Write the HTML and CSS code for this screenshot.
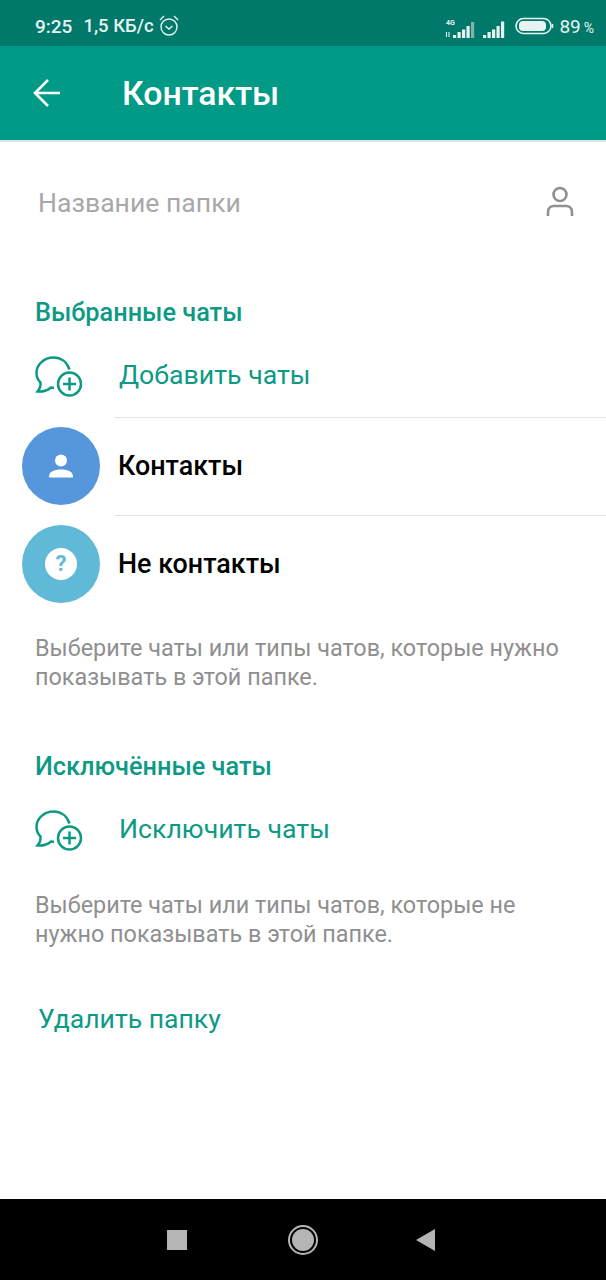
FILE: index.html
```html
<!DOCTYPE html>
<html>
<head>
    <title>Контакты</title>
    <link rel="stylesheet" href="styles.css">
</head>
<body>
    <div class="phone">
        <div class="status-bar">
            <div class="status-left">
                <span class="status-time">9:25</span>
                <span class="status-speed">1,5 КБ/с</span>
                <svg class="alarm" width="20" height="22" viewBox="0 0 20 22" fill="none" stroke="#e6f3f0" stroke-width="1.400">
                    <circle cx="10" cy="13" r="8"/>
                    <path d="M6.500 12l3.500 3 3.500-3"/>
                    <path d="M1 6l4-4M19 6l-4-4"/>
                </svg>
            </div>
            <div class="status-right">
                <svg width="34" height="24" viewBox="0 0 34 24">
                    <text x="2" y="11" class="net-label">4G</text>
                    <path d="M2.500 18v5M5 18v5" stroke="#e6f3f0" stroke-width="1.100" fill="none"/>
                    <path d="M9 21h3.200v3H9zM13.500 18h3.200v6h-3.200zM18 15.500h3.200V24H18zM22.500 12h3.200v12h-3.200z" fill="#e6f3f0"/>
                    <path d="M27 8h3.200v16H27z" fill="#7fb5a9"/>
                </svg>
                <svg class="signal-two" width="24" height="24" viewBox="0 0 24 24">
                    <path d="M1 21h3.200v3H1zM5.500 18h3.200v6H5.500zM10 15.500h3.200V24H10zM14.500 12h3.200v12h-3.200zM19 7.500h3.200V24H19z" fill="#e6f3f0"/>
                </svg>
                <svg class="battery" width="39" height="18" viewBox="0 0 39 18">
                    <rect x="1" y="1.500" width="35" height="15" rx="7.500" fill="none" stroke="#e6f3f0" stroke-width="1.600"/>
                    <rect x="4" y="4" width="27" height="10" rx="4" fill="#e6f3f0"/>
                    <path d="M37.500 7v4" stroke="#e6f3f0" stroke-width="1.500"/>
                </svg>
                <span class="battery-value">89</span>
                <span class="battery-percent">%</span>
            </div>
        </div>

        <div class="app-bar">
            <svg class="back" width="30" height="30" viewBox="0 0 30 30" fill="none" stroke="#fff" stroke-width="2.600">
                <path d="M28 15H3M16 2L3 15l13 13"/>
            </svg>
            <h1 class="app-title">Контакты</h1>
        </div>

        <div class="content">
            <div class="name-row">
                <span class="name-placeholder">Название папки</span>
                <svg width="30" height="32" viewBox="0 0 30 32" fill="none" stroke="#8f8f8f" stroke-width="2.600">
                    <circle cx="15" cy="8.500" r="6.500"/>
                    <path d="M3 30v-4c0-4 3-6 6-6h12c3 0 6 2 6 6v4"/>
                </svg>
            </div>

            <div class="section-title first">Выбранные чаты</div>
            <div class="add-row">
                <svg class="chat-plus" width="50" height="44" viewBox="0 -1 50 44" fill="none" stroke="#0d9a85" stroke-width="2.500">
                    <path d="M35.500 15.500C33 8 27 3.500 19.500 3.500 10 3.500 2.500 10.500 2.500 19c0 3.500 1.500 7 4 9.500.3 3-.8 6.500-3 9 5 .5 10-1 13.500-4 1.200.2 2 .3 3 .3"/>
                    <circle cx="35.500" cy="30" r="11.500"/>
                    <path d="M35.500 23.500v13M29 30h13"/>
                </svg>
                <span class="add-label">Добавить чаты</span>
            </div>
            <div class="chat-row with-line">
                <div class="avatar blue">
                    <svg width="28" height="28" viewBox="0 0 28 28" fill="#fff">
                        <circle cx="14" cy="8.500" r="6"/>
                        <path d="M2 24.500c0-4.500 5-7 12-7s12 2.500 12 7c0 .8-.5 1-1 1H3c-.5 0-1-.2-1-1z"/>
                    </svg>
                </div>
                <span class="chat-name">Контакты</span>
            </div>
            <div class="chat-row with-line">
                <div class="avatar teal">
                    <div class="question">?</div>
                </div>
                <span class="chat-name">Не контакты</span>
            </div>
            <p class="hint first-hint">Выберите чаты или типы чатов, которые нужно показывать в этой папке.</p>

            <div class="section-title second">Исключённые чаты</div>
            <div class="add-row">
                <svg class="chat-plus" width="50" height="44" viewBox="0 -1 50 44" fill="none" stroke="#0d9a85" stroke-width="2.500">
                    <path d="M35.500 15.500C33 8 27 3.500 19.500 3.500 10 3.500 2.500 10.500 2.500 19c0 3.500 1.500 7 4 9.500.3 3-.8 6.500-3 9 5 .5 10-1 13.500-4 1.200.2 2 .3 3 .3"/>
                    <circle cx="35.500" cy="30" r="11.500"/>
                    <path d="M35.500 23.500v13M29 30h13"/>
                </svg>
                <span class="add-label">Исключить чаты</span>
            </div>
            <p class="hint second-hint">Выберите чаты или типы чатов, которые не нужно показывать в этой папке.</p>

            <div class="delete-row">Удалить папку</div>
        </div>

        <div class="nav-bar">
            <div class="nav-square"></div>
            <div class="nav-circle"><div class="nav-dot"></div></div>
            <svg width="20" height="24" viewBox="0 0 20 24"><path d="M19 1v22L0 12z" fill="#b5b5b5"/></svg>
        </div>
    </div>
</body>
</html>
```

FILE: styles.css
```css
body {
    margin: 0;
    font-family: Roboto, "Noto Sans", sans-serif;
    background-color: #fff;
}

.phone {
    width: 606px;
    height: 1280px;
    display: flex;
    flex-direction: column;
    overflow: hidden;
}

.status-bar {
    height: 46px;
    box-sizing: border-box;
    padding: 6px 12px 0 35px;
    background-color: #00796b;
    color: #e6f3f0;
    display: flex;
    justify-content: space-between;
    align-items: center;
}

.status-left,
.status-right {
    display: flex;
    align-items: center;
}

.status-time {
    font-size: 19px;
    font-weight: 500;
}

.status-speed {
    font-size: 18.500px;
    font-weight: 500;
    margin-left: 11px;
}

.alarm {
    margin-left: 5px;
    margin-top: -3px;
}

.net-label {
    font-size: 7px;
    font-weight: 700;
    fill: #e6f3f0;
    font-family: Roboto, sans-serif;
}

.signal-two {
    margin-left: 4px;
}

.battery {
    margin-left: 9px;
}

.battery-value {
    font-size: 19px;
    margin-left: 5px;
}

.battery-percent {
    font-size: 14px;
    margin-left: 3px;
    padding-top: 4px;
}

.app-bar {
    height: 96px;
    background-color: #009a86;
    border-bottom: 2px solid #d5e8e4;
    box-sizing: border-box;
    display: flex;
    align-items: center;
    padding-left: 32px;
    flex-shrink: 0;
}

.back {
    width: 30px;
    height: 30px;
}

.app-title {
    margin: 0 0 0 60px;
    font-size: 33.800px;
    font-weight: 500;
    color: #fff;
}

.content {
    flex: 1;
    background-color: #fff;
}

.name-row {
    height: 44px;
    margin-top: 38px;
    padding: 0 31px 0 38px;
    display: flex;
    justify-content: space-between;
    align-items: center;
}

.name-placeholder {
    font-size: 26.600px;
    color: #a8a8a8;
}

.section-title {
    font-size: 25.300px;
    font-weight: 500;
    color: #0d9a85;
    margin-left: 35px;
    line-height: 30px;
}

.section-title.first {
    margin-top: 74px;
}

.section-title.second {
    margin-top: 60px;
}

.add-row {
    display: flex;
    align-items: center;
    height: 84px;
    margin-top: 5px;
    padding-left: 34px;
}

.chat-plus {
    flex-shrink: 0;
}

.add-label {
    font-size: 26.700px;
    color: #0d9a85;
    margin-left: 35px;
}

.chat-row {
    height: 98px;
    display: flex;
    align-items: center;
    padding-left: 22px;
    position: relative;
}

.chat-row.with-line::before {
    content: "";
    position: absolute;
    top: 0;
    left: 115px;
    right: 0;
    height: 1px;
    background-color: #e2e2e2;
}

.avatar {
    width: 78px;
    height: 78px;
    border-radius: 50%;
    display: flex;
    justify-content: center;
    align-items: center;
}

.avatar.blue {
    background-color: #5596dd;
}

.avatar.teal {
    background-color: #60b9d6;
}

.question {
    width: 32px;
    height: 32px;
    border-radius: 50%;
    background-color: #fff;
    color: #60b9d6;
    font-size: 22px;
    font-weight: 700;
    line-height: 32px;
    text-align: center;
}

.chat-name {
    font-size: 26.900px;
    font-weight: 500;
    color: #000;
    margin-left: 18px;
}

.hint {
    margin: 0 0 0 35px;
    width: 540px;
    font-size: 23.400px;
    line-height: 29px;
    color: #8f8f8f;
}

.first-hint {
    margin-top: 21px;
}

.second-hint {
    margin-top: 20px;
}

.delete-row {
    font-size: 26.600px;
    color: #0d9a85;
    margin: 54px 0 0 38px;
}

.nav-bar {
    height: 81px;
    flex-shrink: 0;
    background-color: #000;
    display: flex;
    align-items: center;
    padding-left: 167px;
}

.nav-square {
    width: 20px;
    height: 20px;
    background-color: #b5b5b5;
    margin-right: 101px;
}

.nav-circle {
    width: 30px;
    height: 30px;
    border-radius: 50%;
    border: 2px solid #b5b5b5;
    box-sizing: border-box;
    display: flex;
    align-items: center;
    justify-content: center;
    margin-right: 98px;
}

.nav-dot {
    width: 22px;
    height: 22px;
    border-radius: 50%;
    background-color: #b5b5b5;
}
```
